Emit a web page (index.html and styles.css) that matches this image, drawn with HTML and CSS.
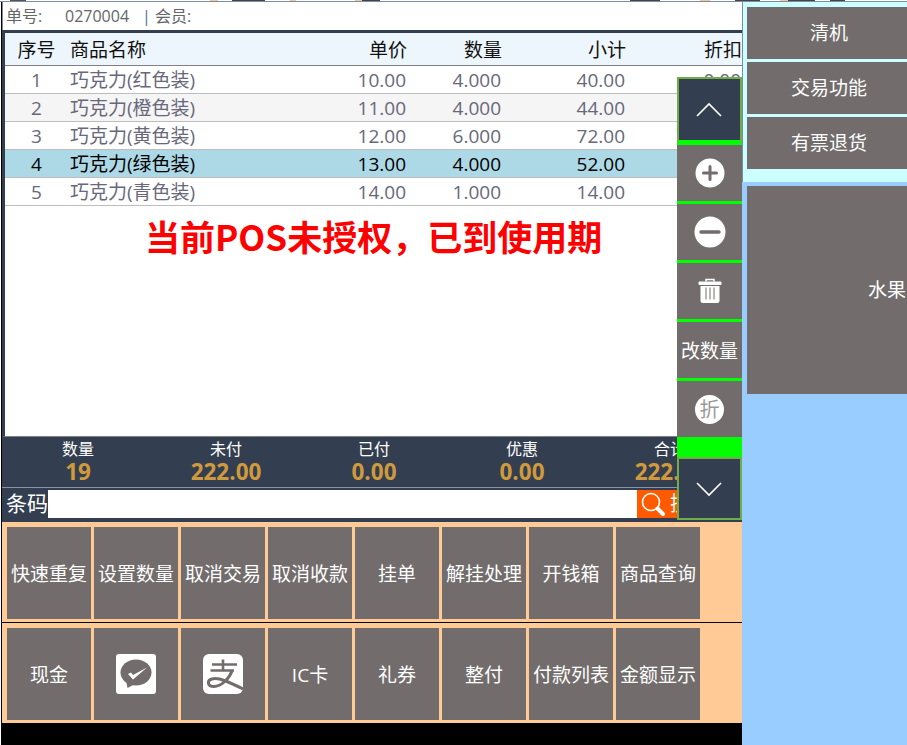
FILE: index.html
```html
<!DOCTYPE html>
<html lang="zh-CN">
<head>
<meta charset="utf-8">
<title>POS</title>
<link rel="stylesheet" href="styles.css">
</head>
<body>
<div class="app">
  <div class="topline"></div>
  <div class="workspace">
    <main class="main">
      <div class="infobar"><span class="info-label">单号:</span><span class="info-no">0270004</span><span class="info-sep">|</span><span>会员:</span></div>
      <section class="sheet">
        <div class="row head"><span class="c-seq">序号</span><span class="c-name">商品名称</span><span class="c-num">单价</span><span class="c-num">数量</span><span class="c-num">小计</span><span class="c-num">折扣</span></div>
        <div class="row"><span class="c-seq">1</span><span class="c-name">巧克力(红色装)</span><span class="c-num">10.00</span><span class="c-num">4.000</span><span class="c-num">40.00</span><span class="c-num">0.00</span></div>
        <div class="row alt"><span class="c-seq">2</span><span class="c-name">巧克力(橙色装)</span><span class="c-num">11.00</span><span class="c-num">4.000</span><span class="c-num">44.00</span><span class="c-num">0.00</span></div>
        <div class="row"><span class="c-seq">3</span><span class="c-name">巧克力(黄色装)</span><span class="c-num">12.00</span><span class="c-num">6.000</span><span class="c-num">72.00</span><span class="c-num">0.00</span></div>
        <div class="row selected"><span class="c-seq">4</span><span class="c-name">巧克力(绿色装)</span><span class="c-num">13.00</span><span class="c-num">4.000</span><span class="c-num">52.00</span><span class="c-num">0.00</span></div>
        <div class="row"><span class="c-seq">5</span><span class="c-name">巧克力(青色装)</span><span class="c-num">14.00</span><span class="c-num">1.000</span><span class="c-num">14.00</span><span class="c-num">0.00</span></div>
        <div class="notice">当前POS未授权，已到使用期</div>
      </section>
      <section class="summary">
        <div class="stat"><span class="stat-label">数量</span><b class="stat-value">19</b></div>
        <div class="stat"><span class="stat-label">未付</span><b class="stat-value">222.00</b></div>
        <div class="stat"><span class="stat-label">已付</span><b class="stat-value">0.00</b></div>
        <div class="stat"><span class="stat-label">优惠</span><b class="stat-value">0.00</b></div>
        <div class="stat"><span class="stat-label">合计</span><b class="stat-value">222.00</b></div>
      </section>
      <section class="barcode">
        <label class="barcode-label">条码</label>
        <div class="barcode-input"></div>
        <div class="search-btn">
          <svg class="search-icon" width="28" height="28" viewBox="0 0 28 28"><circle cx="12" cy="12" r="8.5" fill="none" stroke="#fff" stroke-width="1.6"/><path d="M18.5 18.5L24 24" stroke="#fff" stroke-width="4" stroke-linecap="round"/></svg>
          <span>搜索</span>
        </div>
      </section>
      <section class="keys keys-first">
        <div class="key">快速重复</div><div class="key">设置数量</div><div class="key">取消交易</div><div class="key">取消收款</div><div class="key">挂单</div><div class="key">解挂处理</div><div class="key">开钱箱</div><div class="key">商品查询</div>
      </section>
      <section class="keys keys-second">
        <div class="key">现金</div>
        <div class="key"><svg width="40" height="40" viewBox="0 0 40 40"><rect width="40" height="40" rx="3" fill="#fff"/><ellipse cx="20" cy="18.500" rx="15.500" ry="13" fill="#726d6c"/><path d="M10 26L11.500 34L19 30Z" fill="#726d6c"/><path d="M12 20L15 18.500L17 21L31 13.500L17 25.500Z" fill="#fff"/></svg></div>
        <div class="key"><svg width="40" height="40" viewBox="0 0 40 40"><rect width="40" height="40" rx="6" fill="#fff"/><path d="M9 10.500H34M20 5.500V17M7.500 16.500H31" fill="none" stroke="#726d6c" stroke-width="2.600"/><path d="M29 17C26 25 18 32.500 11 32.500C4.500 32.500 3.500 26.500 9 25C16 23 28 29 40 35" fill="none" stroke="#726d6c" stroke-width="3"/></svg></div>
        <div class="key">IC卡</div><div class="key">礼券</div><div class="key">整付</div><div class="key">付款列表</div><div class="key">金额显示</div>
      </section>
      <aside class="rail">
        <div class="rail-nav"><svg width="28" height="16" viewBox="0 0 28 16"><path d="M2 14L14 2L26 14" fill="none" stroke="#fff" stroke-width="1.600"/></svg></div>
        <div class="rail-cell rail-gap"><svg width="30" height="30" viewBox="0 0 30 30"><circle cx="15" cy="15" r="14.500" fill="#fff"/><path d="M15 8.500V21.500M8.500 15H21.500" stroke="#726d6c" stroke-width="3" stroke-linecap="round"/></svg></div>
        <div class="rail-cell rail-gap"><svg width="32" height="32" viewBox="0 0 32 32"><circle cx="16" cy="16" r="15.500" fill="#fff"/><path d="M7 16H25" stroke="#726d6c" stroke-width="3.500" stroke-linecap="round"/></svg></div>
        <div class="rail-cell rail-gap"><svg width="24" height="26" viewBox="0 0 24 26"><path d="M8 3.500V1.500H16V3.500" fill="none" stroke="#fff" stroke-width="1.500"/><path d="M1 4H23V6.500H1Z" fill="#fff" stroke="#fff" stroke-linejoin="round"/><path d="M2.500 8H21.500V22.500Q21.500 25 19 25H5Q2.500 25 2.500 22.500Z" fill="#fff"/><path d="M8 9.500V21.500M12 9.500V21.500M16 9.500V21.500" stroke="#726d6c" stroke-width="1"/></svg></div>
        <div class="rail-cell rail-gap rail-text">改数量</div>
        <div class="rail-cell"><span class="discount-badge">折</span></div>
        <div class="rail-spacer"></div>
        <div class="rail-nav"><svg width="28" height="16" viewBox="0 0 28 16"><path d="M2 2L14 14L26 2" fill="none" stroke="#fff" stroke-width="1.600"/></svg></div>
      </aside>
    </main>
    <aside class="side">
      <div class="func">
        <div class="func-btn">清机</div>
        <div class="func-btn">交易功能</div>
        <div class="func-btn">有票退货</div>
      </div>
      <div class="cats">
        <div class="cat-btn">水果</div>
      </div>
    </aside>
  </div>
</div>
</body>
</html>
```
FILE: styles.css
```css
* { box-sizing: border-box; }
html, body { margin: 0; padding: 0; }
body {
  width: 907px;
  height: 745px;
  overflow: hidden;
  background: #fff;
  font-family: "Open Sans", "Noto Sans CJK SC", sans-serif;
  font-size: 19px;
  line-height: 1.2;
}
.app { width: 907px; height: 745px; display: flex; flex-direction: column; }
.topline {
  height: 2px;
  flex: none;
  border-bottom: 1px solid #7f8ba3;
  background: linear-gradient(90deg, #fff 0 10px, #555 10px 26px, #fff 26px 210px, #f5c88e 210px 218px, #fff 218px 232px, #444 232px 265px, #fff 265px 290px, #f5c88e 290px 296px, #fff 296px 355px, #f5c88e 355px 362px, #444 362px 380px, #fff 380px 630px, #444 630px 660px, #fff 660px 700px, #f5c88e 700px 710px, #fff 710px 735px, #444 735px 760px, #fff 760px 780px, #f5c88e 780px 788px, #444 788px 815px, #fff 815px 830px, #444 830px 845px, #fff 845px);
}
.workspace { flex: 1; display: flex; min-height: 0; }
.main {
  position: relative;
  width: 742px;
  flex: none;
  display: flex;
  flex-direction: column;
  padding-left: 1px;
  background: linear-gradient(90deg, #fff 0 1px, #000 1px);
}

.infobar {
  height: 28px;
  flex: none;
  margin-left: 1px;
  display: flex;
  align-items: center;
  padding: 2px 0 0 3px;
  background: #fff;
  border-left: 1px solid #7f8ba3;
  color: #666;
  font-size: 16px;
}
.info-label { width: 59px; }
.info-no { width: 77px; }
.info-sep { width: 13px; color: #4f6f94; }

.sheet {
  height: 407px;
  flex: none;
  margin-left: 1px;
  border-left: 3px solid #333f50;
  border-top: 3px solid #333f50;
  border-bottom: 1px solid #808080;
  background: #fff;
  overflow: hidden;
}
.row {
  display: grid;
  grid-template-columns: 63px 200px 139px 95px 124px 116px;
  width: 737px;
  height: 28px;
  padding-top: 2px;
  align-items: center;
  border-bottom: 1px solid #bdbdbd;
  color: #68687a;
  white-space: nowrap;
}
.row.head {
  height: 33px;
  background: #eef6fd;
  color: #111;
  border-bottom-color: #808080;
}
.row.alt { background: #f5f5f5; }
.row.selected { background: #add8e6; color: #000; }
.c-seq { text-align: center; }
.c-name { padding-left: 2px; }
.c-num { text-align: right; }
.row:not(.head) .c-num { padding-right: 1px; }

.notice {
  margin: 12px 0 0 140px;
  color: #f00;
  font-family: "Noto Sans CJK SC", sans-serif;
  font-size: 35px;
  line-height: 36px;
  font-weight: 700;
  white-space: nowrap;
}

.summary {
  height: 50px;
  flex: none;
  margin-left: 1px;
  padding-left: 2px;
  display: grid;
  grid-template-columns: repeat(5, 148px);
  background: #333f50;
}
.stat { display: flex; flex-direction: column; align-items: center; }
.stat-label { color: #fff; font-size: 16px; line-height: 24px; }
.stat-value { color: #d09a3c; font-size: 22.5px; line-height: 22px; font-weight: 700; }

.barcode {
  height: 35px;
  flex: none;
  margin-left: 1px;
  display: flex;
  padding: 2px 0 4px 4px;
  background: #333f50;
  border-top: 1px solid #8a93a3;
}
.barcode-label { width: 42px; color: #fff; font-size: 21px; line-height: 26px; }
.barcode-input { width: 589px; background: #fff; }
.search-btn {
  flex: 1;
  display: flex;
  align-items: center;
  gap: 3px;
  padding-left: 2px;
  background: #ff5a00;
  color: #fff;
  font-size: 20px;
  white-space: nowrap;
}
.search-icon { flex: none; }

.keys {
  flex: none;
  margin-left: 1px;
  display: flex;
  gap: 3px;
  padding: 5px 0 3px 5px;
  background: #ffca96;
}
.keys-first { height: 100px; }
.keys-second { height: 100px; margin-top: 1px; }
.key {
  width: 84px;
  display: flex;
  align-items: center;
  justify-content: center;
  padding-top: 2px;
  background: #726d6c;
  color: #fff;
  white-space: nowrap;
}
.key svg { margin-top: -2px; }

.rail {
  position: absolute;
  left: 677px;
  top: 75px;
  width: 65px;
  display: flex;
  flex-direction: column;
  background: #726d6c;
}
.rail-nav {
  height: 63px;
  flex: none;
  display: flex;
  align-items: center;
  justify-content: center;
  padding-right: 1px;
  background: #333f50;
  border: 2px solid #70ad47;
}
.rail-cell {
  height: 56px;
  flex: none;
  display: flex;
  align-items: center;
  justify-content: center;
  color: #fff;
  white-space: nowrap;
}
.rail-gap { height: 59px; border-bottom: 3px solid #0f0; }
.rail-text { padding-top: 2px; }
.rail-nav:first-child { height: 68px; border-bottom-width: 5px; border-bottom-color: #0f0; }
.rail-spacer { height: 20px; flex: none; background: #0f0; }
.discount-badge {
  width: 29px;
  height: 29px;
  border-radius: 50%;
  background: #fff;
  color: #999;
  font-size: 20px;
  line-height: 29px;
  text-align: center;
}

.side {
  width: 165px;
  flex: none;
  display: flex;
  flex-direction: column;
  background: #9cf;
  overflow: hidden;
}
.func {
  height: 180px;
  flex: none;
  display: flex;
  flex-direction: column;
  gap: 3px;
  padding: 5px 0 0 4px;
  background: #cff;
  border-left: 1px solid #7f8ba3;
}
.func-btn {
  width: 164px;
  height: 52px;
  flex: none;
  display: flex;
  align-items: center;
  justify-content: center;
  background: #726d6c;
  color: #fff;
}
.cats { flex: 1; padding: 4px 0 0 5px; }
.cat-btn {
  width: 280px;
  height: 208px;
  display: flex;
  align-items: center;
  justify-content: center;
  background: #726d6c;
  color: #fff;
}
```
